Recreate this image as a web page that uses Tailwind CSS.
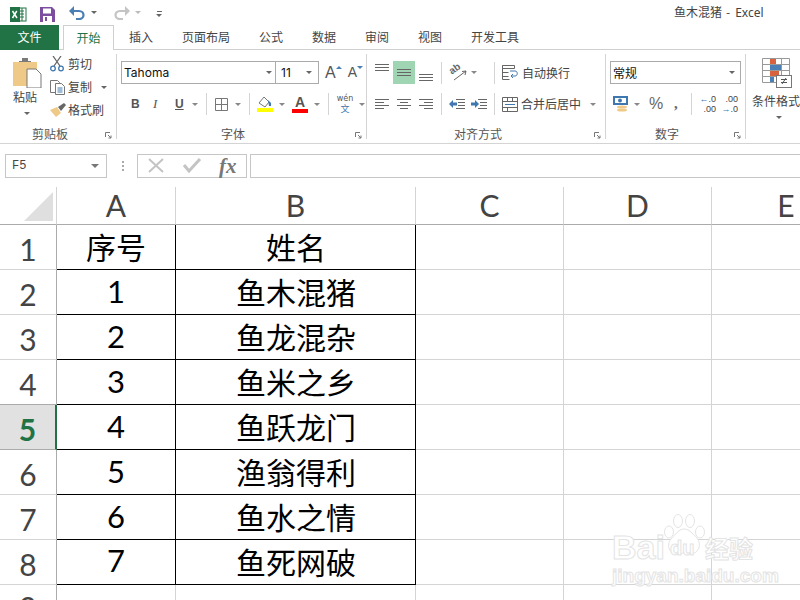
<!DOCTYPE html>
<html lang="zh-CN">
<head>
<meta charset="UTF-8">
<title>鱼木混猪 - Excel</title>
<script src="https://cdn.jsdelivr.net/npm/@tailwindcss/browser@4"></script>
</head>
<body class="bg-white font-['Noto_Sans_CJK_SC','Noto_Sans',sans-serif] text-[12px] text-[#444]">
<div class="relative w-[800px] h-[600px] overflow-hidden bg-white">

  <!-- title bar -->
  <div class="h-[25px] flex items-center relative">
    <svg class="ml-[10px] mt-[3px]" width="17" height="15" viewBox="0 0 17 15"><rect x="7" y="1" width="9" height="13" fill="#fff" stroke="#217346"/><path d="M9 4h5M9 7h5M9 10h5M12 1v13" stroke="#217346"/><rect x="0" y="0" width="10" height="15" fill="#217346"/><path d="M2.500 4l4.500 7M6.800 4l-4.300 7" stroke="#fff" stroke-width="1.500"/></svg>
    <svg class="ml-[13px] mt-[3px]" width="15" height="15" viewBox="0 0 15 15"><path d="M0 0h12l3 3v12H0z" fill="#7d4e9f"/><rect x="3" y="1.500" width="8" height="5" fill="#fff"/><rect x="3" y="9" width="9" height="6" fill="#fff"/><rect x="5" y="10" width="2" height="4" fill="#7d4e9f"/></svg>
    <svg class="ml-[14px] mt-[1px]" width="16" height="14" viewBox="0 0 16 14"><path d="M3 5h7c6 0 6 8 0 8H7" fill="none" stroke="#4a7fb5" stroke-width="2.200"/><path d="M0 5l5-5v10z" fill="#4a7fb5"/></svg>
    <div class="ml-[6px] w-0 h-0 border-x-[3px] border-x-transparent border-t-[3px] border-t-[#666]"></div>
    <svg class="ml-[17px] mt-[1px]" width="16" height="14" viewBox="0 0 16 14"><path d="M13 5H6c-6 0-6 8 0 8h3" fill="none" stroke="#c4c4c4" stroke-width="2.200"/><path d="M16 5l-5-5v10z" fill="#c4c4c4"/></svg>
    <div class="ml-[5px] w-0 h-0 border-x-[3px] border-x-transparent border-t-[3px] border-t-[#bbb]"></div>
    <div class="ml-[15px] flex flex-col items-center gap-[2px] mt-[2px]">
      <div class="w-[5px] h-px bg-[#666]"></div>
      <div class="w-0 h-0 border-x-[3px] border-x-transparent border-t-[3px] border-t-[#666]"></div>
    </div>
    <div class="absolute left-[674px] top-[3px] leading-[18px] whitespace-nowrap">鱼木混猪<span class="ml-[4px]">-</span><span class="ml-[5px] font-['Noto_Sans']">Excel</span></div>
  </div>

  <!-- tabs -->
  <div class="h-[25px] flex border-b border-[#cfcfcf] leading-[24px]">
    <div class="w-[59px] h-[25px] bg-[#217346] text-white text-center">文件</div>
    <div class="ml-[4px] w-[51px] h-[25px] bg-white border border-b-0 border-[#cfcfcf] text-[#217346] text-center">开始</div>
    <div class="ml-[15px] flex gap-[29px]">
      <span>插入</span><span>页面布局</span><span>公式</span><span>数据</span><span>审阅</span><span>视图</span><span>开发工具</span>
    </div>
  </div>

  <!-- ribbon -->
  <div class="h-[94px] flex border-b border-[#d4d4d4] pt-[4px]">

    <!-- clipboard -->
    <div class="relative w-[117px] h-[85px] border-r border-[#d4d4d4] shrink-0">
      <div class="flex h-[68px]">
        <div class="ml-[13px] w-[28px] flex flex-col items-start">
          <svg class="mt-[4px]" width="29" height="30" viewBox="0 0 29 30"><path d="M0 4h24v24H0z" fill="#eec987"/><path d="M6 4h12v-1h-3V0H9v3H6z" fill="#7a7a7a"/><path d="M14 11h9l5 5v14H14z" fill="#fff" stroke="#777"/></svg>
          <span class="leading-[18px] w-[24px] text-center whitespace-nowrap text-[12px]">粘贴</span>
          <div class="ml-[11px] mt-[6px] w-0 h-0 border-x-[3px] border-x-transparent border-t-[3px] border-t-[#666]"></div>
        </div>
        <div class="ml-[9px] flex flex-col gap-[5px] mt-[1px]">
          <div class="flex items-center h-[18px]">
            <svg width="14" height="16" viewBox="0 0 14 16"><path d="M3 0l7 10M11 0L4 10" stroke="#666" stroke-width="1.300"/><circle cx="3" cy="12.500" r="2.300" fill="none" stroke="#3f78b0" stroke-width="1.300"/><circle cx="11" cy="12.500" r="2.300" fill="none" stroke="#3f78b0" stroke-width="1.300"/></svg>
            <span class="ml-[4px]">剪切</span>
          </div>
          <div class="flex items-center h-[18px]">
            <svg width="15" height="15" viewBox="0 0 15 15"><path d="M.5.500h7l2 2v10H.5z" fill="#fff" stroke="#777"/><path d="M5.500 3.500h6l3 3v8h-9z" fill="#fff" stroke="#777"/><path d="M7.500 8h5M7.500 10h5M7.500 12h5" stroke="#3f78b0"/></svg>
            <span class="ml-[3px]">复制</span>
            <div class="ml-[9px] w-0 h-0 border-x-[3px] border-x-transparent border-t-[3px] border-t-[#666]"></div>
          </div>
          <div class="flex items-center h-[18px]">
            <svg width="16" height="14" viewBox="0 0 16 14"><path d="M0 7l7-3 4 6-5 4z" fill="#eec987"/><path d="M8 4l6-4 2 2-5 6z" fill="#666"/></svg>
            <span class="ml-[2px]">格式刷</span>
          </div>
        </div>
      </div>
      <div class="absolute left-[32px] top-[71px] leading-[18px] text-[#555]">剪贴板</div>
      <svg class="absolute left-[105px] top-[78px]" width="7" height="7" viewBox="0 0 7 7"><path d="M.5 5V.5H5M3 3l3 3M6 3.500V6H3.500" fill="none" stroke="#777"/></svg>
    </div>

    <!-- font -->
    <div class="relative w-[250px] h-[85px] border-r border-[#d4d4d4] shrink-0">
      <div class="flex items-center ml-[4px] mt-[7px] h-[23px]">
        <div class="w-[155px] h-[23px] border border-[#ababab] flex items-center justify-between pl-[2px] pr-[3px] font-['Inter'] text-[#111]">Tahoma
          <div class="w-0 h-0 border-x-[3px] border-x-transparent border-t-[3px] border-t-[#666]"></div>
        </div>
        <div class="w-[43px] h-[23px] border border-l-0 border-[#ababab] flex items-center justify-between pl-[5px] pr-[6px] font-['Inter'] text-[#111]">11
          <div class="w-0 h-0 border-x-[3px] border-x-transparent border-t-[3px] border-t-[#666]"></div>
        </div>
        <span class="ml-[6px] text-[16px] font-['Liberation_Sans'] text-[#555]">A</span>
        <div class="mb-[10px] w-0 h-0 border-x-[3px] border-x-transparent border-b-[3px] border-b-[#4a7fb5]"></div>
        <span class="ml-[6px] text-[14px] font-['Liberation_Sans'] text-[#555]">A</span>
        <div class="mb-[10px] w-0 h-0 border-x-[3px] border-x-transparent border-t-[3px] border-t-[#4a7fb5]"></div>
      </div>
      <div class="flex items-center ml-[14px] mt-[9px] h-[22px] font-['Liberation_Sans'] text-[#555]">
        <span class="font-bold w-[9px]">B</span>
        <span class="ml-[13px] italic font-['Liberation_Serif'] w-[9px] text-[13px]">I</span>
        <span class="ml-[13px] font-bold underline w-[10px]">U</span>
        <div class="ml-[7px] w-0 h-0 border-x-[3px] border-x-transparent border-t-[3px] border-t-[#888]"></div>
        <div class="ml-[8px] w-px h-[22px] bg-[#d4d4d4]"></div>
        <svg class="ml-[8px]" width="13" height="13" viewBox="0 0 13 13"><path d="M.5.500h12v12H.5zM6.500.500v12M.5 6.500h12" fill="none" stroke="#777"/></svg>
        <div class="ml-[7px] w-0 h-0 border-x-[3px] border-x-transparent border-t-[3px] border-t-[#888]"></div>
        <div class="ml-[8px] w-px h-[22px] bg-[#d4d4d4]"></div>
        <div class="ml-[7px] w-[16px] flex flex-col items-center">
          <svg width="15" height="12" viewBox="0 0 15 12"><path d="M1 7l5-6 5 5-4 5z" fill="#fff" stroke="#777"/><path d="M10 4l3 3v3h-2z" fill="#3f78b0"/></svg>
          <div class="w-[16px] h-[4px] bg-[#ffff00]"></div>
        </div>
        <div class="ml-[6px] w-0 h-0 border-x-[3px] border-x-transparent border-t-[3px] border-t-[#888]"></div>
        <div class="ml-[7px] w-[16px] flex flex-col items-center">
          <span class="font-bold text-[14px] leading-[13px] text-[#555]">A</span>
          <div class="w-[16px] h-[4px] bg-[#ff0000]"></div>
        </div>
        <div class="ml-[6px] w-0 h-0 border-x-[3px] border-x-transparent border-t-[3px] border-t-[#888]"></div>
        <div class="ml-[8px] w-px h-[22px] bg-[#d4d4d4]"></div>
        <div class="ml-[8px] w-[16px] flex flex-col items-center">
          <span class="text-[8px] leading-[10px] font-['DejaVu_Sans'] whitespace-nowrap">wén</span>
          <span class="text-[9px] leading-[10px] text-[#3f78b0] font-['Noto_Sans_CJK_SC']">文</span>
        </div>
        <div class="ml-[6px] w-0 h-0 border-x-[3px] border-x-transparent border-t-[3px] border-t-[#888]"></div>
      </div>
      <div class="absolute left-[104px] top-[71px] leading-[18px] text-[#555]">字体</div>
      <svg class="absolute left-[238px] top-[78px]" width="7" height="7" viewBox="0 0 7 7"><path d="M.5 5V.5H5M3 3l3 3M6 3.500V6H3.500" fill="none" stroke="#777"/></svg>
    </div>

    <!-- alignment -->
    <div class="relative w-[239px] h-[85px] border-r border-[#d4d4d4] shrink-0">
      <div class="flex items-center ml-[8px] mt-[7px] h-[23px]">
        <svg class="self-start mt-[3px]" width="14" height="8" viewBox="0 0 14 8"><path d="M0 .500h14M0 3.500h14M0 6.500h14" stroke="#666"/></svg>
        <div class="ml-[4px] w-[22px] h-[23px] bg-[#a0d5b4] flex items-center justify-center">
          <svg width="14" height="8" viewBox="0 0 14 8"><path d="M0 .500h14M0 3.500h14M0 6.500h14" stroke="#666"/></svg>
        </div>
        <svg class="ml-[4px] self-end mb-[2px]" width="14" height="8" viewBox="0 0 14 8"><path d="M0 .500h14M0 3.500h14M0 6.500h14" stroke="#666"/></svg>
        <div class="ml-[8px] w-px h-[22px] bg-[#d4d4d4]"></div>
        <div class="relative ml-[7px] w-[18px] h-[16px]">
          <span class="absolute left-0 top-[-2px] -rotate-[35deg] text-[10px] leading-[12px] font-bold font-['Liberation_Sans'] text-[#666]">ab</span>
          <svg class="absolute left-0 top-0" width="18" height="16" viewBox="0 0 18 16"><path d="M5 15L17 6M17 6l-4 .5M17 6l-1 4" fill="none" stroke="#666"/></svg>
        </div>
        <div class="ml-[4px] w-0 h-0 border-x-[3px] border-x-transparent border-t-[3px] border-t-[#888]"></div>
        <div class="ml-[17px] w-px h-[22px] bg-[#d4d4d4]"></div>
        <svg class="ml-[7px]" width="16" height="16" viewBox="0 0 16 16"><path d="M.5.500h12v3H.5zM.5 7.500h6M.5 11.500h6M.5.500v14h7" fill="none" stroke="#666"/><path d="M9 11h4c3 0 3-5 0-5H8" fill="none" stroke="#3f78b0"/><path d="M11 9l-2 2 2 2" fill="none" stroke="#3f78b0"/></svg>
        <span class="ml-[4px] whitespace-nowrap">自动换行</span>
      </div>
      <div class="flex items-center ml-[8px] mt-[9px] h-[22px]">
        <svg width="14" height="10" viewBox="0 0 14 10"><path d="M0 .500h14M0 3.500h9M0 6.500h14M0 9.500h9" stroke="#666"/></svg>
        <svg class="ml-[8px]" width="14" height="10" viewBox="0 0 14 10"><path d="M0 .500h14M3 3.500h8M0 6.500h14M3 9.500h8" stroke="#666"/></svg>
        <svg class="ml-[8px]" width="14" height="10" viewBox="0 0 14 10"><path d="M0 .500h14M5 3.500h9M0 6.500h14M5 9.500h9" stroke="#666"/></svg>
        <div class="ml-[8px] w-px h-[22px] bg-[#d4d4d4]"></div>
        <svg class="ml-[7px]" width="16" height="11" viewBox="0 0 16 11"><path d="M7 .500h9M9 3.500h7M9 6.500h7M7 9.500h9" stroke="#666"/><path d="M0 5l4-4v2.500h4v3H4V9z" fill="#3f78b0"/></svg>
        <svg class="ml-[6px]" width="16" height="11" viewBox="0 0 16 11"><path d="M7 .500h9M9 3.500h7M9 6.500h7M7 9.500h9" stroke="#666"/><path d="M8 5L4 1v2.500H0v3h4V9z" fill="#3f78b0"/></svg>
        <div class="ml-[7px] w-px h-[22px] bg-[#d4d4d4]"></div>
        <svg class="ml-[7px]" width="16" height="15" viewBox="0 0 16 15"><path d="M.5.500h15v14H.5zM.5 4.500h15M.5 10.500h15M5.500.500v4M10.500.500v4M5.500 10.500v4" fill="none" stroke="#666"/><path d="M3 7.500h10" stroke="#3f78b0"/></svg>
        <span class="ml-[3px] whitespace-nowrap">合并后居中</span>
        <div class="ml-[9px] w-0 h-0 border-x-[3px] border-x-transparent border-t-[3px] border-t-[#888]"></div>
      </div>
      <div class="absolute left-[87px] top-[71px] leading-[18px] text-[#555]">对齐方式</div>
      <svg class="absolute left-[227px] top-[78px]" width="7" height="7" viewBox="0 0 7 7"><path d="M.5 5V.5H5M3 3l3 3M6 3.500V6H3.500" fill="none" stroke="#777"/></svg>
    </div>

    <!-- number -->
    <div class="relative w-[140px] h-[85px] border-r border-[#d4d4d4] shrink-0">
      <div class="ml-[4px] mt-[7px] w-[131px] h-[23px] border border-[#ababab] flex items-center justify-between pl-[2px] pr-[5px] text-[#111]">常规
        <div class="w-0 h-0 border-x-[3px] border-x-transparent border-t-[3px] border-t-[#666]"></div>
      </div>
      <div class="flex items-center ml-[7px] mt-[9px] h-[22px]">
        <svg width="16" height="16" viewBox="0 0 16 16"><rect x="0" y="0" width="15" height="9" fill="#3f78b0"/><rect x="2" y="2" width="11" height="5" fill="#fff"/><circle cx="7" cy="4.500" r="2" fill="#3f78b0"/><ellipse cx="9" cy="11" rx="5" ry="1.500" fill="#eec987"/><ellipse cx="9" cy="14" rx="5" ry="1.500" fill="#eec987"/></svg>
        <div class="ml-[5px] w-0 h-0 border-x-[3px] border-x-transparent border-t-[3px] border-t-[#888]"></div>
        <span class="ml-[9px] text-[16px] font-['Liberation_Sans'] text-[#666] w-[14px]">%</span>
        <span class="ml-[11px] font-bold font-['Liberation_Serif'] text-[15px] text-[#666] w-[6px] -mt-[2px]">,</span>
        <div class="ml-[11px] w-px h-[22px] bg-[#d4d4d4]"></div>
        <div class="ml-[7px] w-[17px] text-[9px] leading-[10px] font-['Liberation_Sans'] text-right"><span class="text-[#3f78b0]">←</span>.0<br>.00</div>
        <div class="ml-[5px] w-[17px] text-[9px] leading-[10px] font-['Liberation_Sans'] text-right">.00<br><span class="text-[#3f78b0]">→</span>.0</div>
      </div>
      <div class="absolute left-[49px] top-[71px] leading-[18px] text-[#555]">数字</div>
      <svg class="absolute left-[128px] top-[78px]" width="7" height="7" viewBox="0 0 7 7"><path d="M.5 5V.5H5M3 3l3 3M6 3.500V6H3.500" fill="none" stroke="#777"/></svg>
    </div>

    <!-- styles -->
    <div class="ml-[6px] flex flex-col items-start shrink-0">
      <svg class="ml-[10px] mt-[4px]" width="30" height="35" viewBox="0 0 30 35"><path d="M.5.500h27v24H.5zM.5 6.500h27M.5 12.500h27M.5 18.500h27M8.500.500v24M19.500.500v24" fill="none" stroke="#999"/><rect x="8" y="1" width="6" height="5" fill="#d8623e"/><rect x="8" y="7" width="11" height="5" fill="#4a7fb5"/><rect x="8" y="13" width="9" height="5" fill="#d8623e"/><rect x="8" y="19" width="4" height="5" fill="#4a7fb5"/><rect x="14.500" y="17.500" width="15" height="12" fill="#fff" stroke="#777"/><path d="M19 21.500h6M19 24.500h6M24 20l-4 6" stroke="#555" fill="none"/></svg>
      <span class="mt-[-1px] leading-[18px] whitespace-nowrap">条件格式</span>
      <div class="ml-[24px] mt-[6px] w-0 h-0 border-x-[3px] border-x-transparent border-t-[3px] border-t-[#666]"></div>
    </div>
  </div>

  <!-- formula bar -->
  <div class="mt-[9px] h-[25px] flex items-center">
    <div class="ml-[5px] w-[102px] h-[24px] border border-[#c6c6c6] flex items-center justify-between pl-[6px] pr-[7px] font-['Liberation_Mono'] text-[12px] text-[#444]">F5
      <div class="w-0 h-0 border-x-[4px] border-x-transparent border-t-[4px] border-t-[#777]"></div>
    </div>
    <div class="ml-[15px] flex flex-col gap-[2px]">
      <div class="w-[2px] h-[2px] bg-[#aaa]"></div>
      <div class="w-[2px] h-[2px] bg-[#aaa]"></div>
      <div class="w-[2px] h-[2px] bg-[#aaa]"></div>
    </div>
    <div class="ml-[13px] w-[110px] h-[24px] border border-[#c6c6c6] flex items-center pl-[9px]">
      <svg width="18" height="15" viewBox="0 0 18 15"><path d="M2 1l14 13M16 1L2 14" stroke="#c4c4c4" stroke-width="2"/></svg>
      <svg class="ml-[17px]" width="20" height="15" viewBox="0 0 20 15"><path d="M2 7l5 6 11-12" fill="none" stroke="#c4c4c4" stroke-width="3"/></svg>
      <span class="ml-[17px] italic font-bold font-['Liberation_Serif'] text-[21px] leading-[22px] text-[#777]">fx</span>
    </div>
    <div class="ml-[3px] flex-1 h-[24px] border border-r-0 border-[#c6c6c6]"></div>
  </div>

  <!-- sheet -->
  <div class="mt-[9px] w-[860px] grid grid-cols-[57px_119px_240px_148px_148px_148px] grid-rows-[38px_repeat(8,45px)_45px] font-['Lato'] text-[#444]">
    <!-- header row -->
    <div class="relative border-r border-b border-[#d4d4d4] border-b-[#ababab]">
      <div class="absolute right-[3px] bottom-[3px] w-0 h-0 border-l-[29px] border-l-transparent border-b-[29px] border-b-[#dfdfdf]"></div>
    </div>
    <div class="border-r border-b border-[#d4d4d4] border-b-[#ababab] flex items-center justify-center text-[30px]">A</div>
    <div class="border-r border-b border-[#d4d4d4] border-b-[#ababab] flex items-center justify-center text-[30px]">B</div>
    <div class="border-r border-b border-[#d4d4d4] border-b-[#ababab] flex items-center justify-center text-[30px]">C</div>
    <div class="border-r border-b border-[#d4d4d4] border-b-[#ababab] flex items-center justify-center text-[30px]">D</div>
    <div class="border-b border-[#ababab] flex items-center justify-center text-[30px]">E</div>

    <!-- row 1 -->
    <div class="border-r border-b border-[#d4d4d4] border-r-[#ababab] flex items-center justify-center text-[30px] pt-[5px]">1</div>
    <div class="border-r border-b border-black flex items-center justify-center text-[30px] text-black">序号</div>
    <div class="border-r border-b border-black flex items-center justify-center text-[30px] text-black">姓名</div>
    <div class="border-r border-b border-[#d4d4d4]"></div><div class="border-r border-b border-[#d4d4d4]"></div><div class="border-b border-[#d4d4d4]"></div>
    <!-- row 2 -->
    <div class="border-r border-b border-[#d4d4d4] border-r-[#ababab] flex items-center justify-center text-[30px] pt-[5px]">2</div>
    <div class="border-r border-b border-black flex items-center justify-center text-[31px] text-black pb-[2px]">1</div>
    <div class="border-r border-b border-black flex items-center justify-center text-[30px] text-black">鱼木混猪</div>
    <div class="border-r border-b border-[#d4d4d4]"></div><div class="border-r border-b border-[#d4d4d4]"></div><div class="border-b border-[#d4d4d4]"></div>
    <!-- row 3 -->
    <div class="border-r border-b border-[#d4d4d4] border-r-[#ababab] flex items-center justify-center text-[30px] pt-[5px]">3</div>
    <div class="border-r border-b border-black flex items-center justify-center text-[31px] text-black pb-[2px]">2</div>
    <div class="border-r border-b border-black flex items-center justify-center text-[30px] text-black">鱼龙混杂</div>
    <div class="border-r border-b border-[#d4d4d4]"></div><div class="border-r border-b border-[#d4d4d4]"></div><div class="border-b border-[#d4d4d4]"></div>
    <!-- row 4 -->
    <div class="border-r border-b border-[#ababab] flex items-center justify-center text-[30px] pt-[5px]">4</div>
    <div class="border-r border-b border-black flex items-center justify-center text-[31px] text-black pb-[2px]">3</div>
    <div class="border-r border-b border-black flex items-center justify-center text-[30px] text-black">鱼米之乡</div>
    <div class="border-r border-b border-[#d4d4d4]"></div><div class="border-r border-b border-[#d4d4d4]"></div><div class="border-b border-[#d4d4d4]"></div>
    <!-- row 5 selected -->
    <div class="bg-[#e1e1e1] border-r-2 border-b border-[#217346] border-b-[#ababab] flex items-center justify-center text-[30px] font-bold text-[#217346] pt-[5px]">5</div>
    <div class="border-r border-b border-black flex items-center justify-center text-[31px] text-black pb-[2px]">4</div>
    <div class="border-r border-b border-black flex items-center justify-center text-[30px] text-black">鱼跃龙门</div>
    <div class="border-r border-b border-[#d4d4d4]"></div><div class="border-r border-b border-[#d4d4d4]"></div><div class="border-b border-[#d4d4d4]"></div>
    <!-- row 6 -->
    <div class="border-r border-b border-[#d4d4d4] border-r-[#ababab] flex items-center justify-center text-[30px] pt-[5px]">6</div>
    <div class="border-r border-b border-black flex items-center justify-center text-[31px] text-black pb-[2px]">5</div>
    <div class="border-r border-b border-black flex items-center justify-center text-[30px] text-black">渔翁得利</div>
    <div class="border-r border-b border-[#d4d4d4]"></div><div class="border-r border-b border-[#d4d4d4]"></div><div class="border-b border-[#d4d4d4]"></div>
    <!-- row 7 -->
    <div class="border-r border-b border-[#d4d4d4] border-r-[#ababab] flex items-center justify-center text-[30px] pt-[5px]">7</div>
    <div class="border-r border-b border-black flex items-center justify-center text-[31px] text-black pb-[2px]">6</div>
    <div class="border-r border-b border-black flex items-center justify-center text-[30px] text-black">鱼水之情</div>
    <div class="border-r border-b border-[#d4d4d4]"></div><div class="border-r border-b border-[#d4d4d4]"></div><div class="border-b border-[#d4d4d4]"></div>
    <!-- row 8 -->
    <div class="border-r border-b border-[#d4d4d4] border-r-[#ababab] flex items-center justify-center text-[30px] pt-[5px]">8</div>
    <div class="border-r border-b border-black flex items-center justify-center text-[31px] text-black pb-[4px]">7</div>
    <div class="border-r border-b border-black flex items-center justify-center text-[30px] text-black">鱼死网破</div>
    <div class="border-r border-b border-[#d4d4d4]"></div><div class="border-r border-b border-[#d4d4d4]"></div><div class="border-b border-[#d4d4d4]"></div>
    <!-- row 9 -->
    <div class="border-r border-[#ababab] flex items-center justify-center text-[30px] pb-[1px]">9</div>
    <div class="border-r border-[#d4d4d4]"></div>
    <div class="border-r border-[#d4d4d4]"></div>
    <div class="border-r border-[#d4d4d4]"></div><div class="border-r border-[#d4d4d4]"></div><div></div>
  </div>

  <!-- baidu watermark -->
  <div class="absolute left-[612px] top-[512px] w-[170px] h-[84px] text-white [-webkit-text-stroke:1px_#e4e4e4] font-['Liberation_Sans']">
    <svg class="absolute left-[50px] top-[2px]" width="44" height="42" viewBox="0 0 44 42" fill="#fff" stroke="#e4e4e4">
      <ellipse cx="7" cy="18" rx="4.500" ry="6"/><ellipse cx="16" cy="7" rx="4.500" ry="6.500"/><ellipse cx="28" cy="7" rx="4.500" ry="6.500"/><ellipse cx="38" cy="18" rx="4.500" ry="6"/>
      <path d="M22 15c5 0 8 4 13 9 5 6 2 16-7 16-3 0-4-1-6-1s-4 1-7 1c-8 0-11-9-6-15 5-5 8-10 13-10z"/>
    </svg>
    <div class="absolute left-0 top-[16px] text-[34px] font-bold leading-[38px] whitespace-nowrap">Bai</div>
    <div class="absolute left-[58px] top-[24px] text-[20px] font-bold leading-[24px] whitespace-nowrap">du</div>
    <div class="absolute left-[93px] top-[20px] text-[24px] leading-[32px] whitespace-nowrap font-['Noto_Sans_CJK_SC'] font-bold">经验</div>
    <div class="absolute left-0 top-[52px] text-[19px] font-bold leading-[24px] whitespace-nowrap">jingyan.baidu.com</div>
  </div>
</div>
</body>
</html>
